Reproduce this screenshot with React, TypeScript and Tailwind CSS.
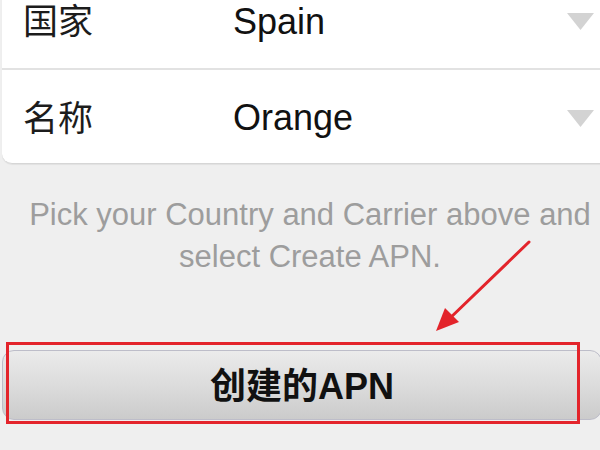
export default function App() {
  return (
    <div className="relative w-[600px] h-[450px] overflow-hidden bg-[#efefef] font-['Liberation_Sans','Noto_Sans_CJK_SC',sans-serif]">
      {/* carrier picker card */}
      <div className="-mt-[27px] ml-[2px] -mr-[12px] bg-white rounded-bl-[10px] border-b border-[#d6d6d6] shadow-[0_1px_1px_rgba(0,0,0,0.06)]">
        <div className="flex items-center h-[97px] pt-[2px] border-b-2 border-[#e2e2e2]">
          <span className="w-[231px] pl-[21px] text-[35px] leading-none text-[#1c1c1c]">国家</span>
          <span className="flex-1 text-[36px] leading-none text-[#111]">Spain</span>
          <Caret />
        </div>
        <div className="flex items-center h-[93px] pt-[3px]">
          <span className="w-[231px] pl-[21px] text-[35px] leading-none text-[#1c1c1c]">名称</span>
          <span className="flex-1 text-[36px] leading-none text-[#111]">Orange</span>
          <Caret />
        </div>
      </div>

      <p className="mt-[30px] pl-[20px] text-center text-[31px] leading-[42px] text-[#9d9d9d]">
        Pick your Country and Carrier above and
        <br />
        select Create APN.
      </p>

      {/* create button with red highlight */}
      <div className="relative mt-[72px] ml-[2px] -mr-[2px]">
        <button className="w-full h-[70px] pt-[4px] rounded-[12px] border border-[#bdbdc9] bg-gradient-to-b from-[#ebebeb] via-[#dcdcdc] to-[#cbcbcb] flex items-center justify-center text-[36px] font-bold text-[#111]">
          创建的APN
        </button>
        <div className="absolute -top-[8px] left-[4px] w-[574px] h-[82px] border-[3px] border-[#e3242b]" />
      </div>

      <svg className="absolute left-0 top-0" width="600" height="450" viewBox="0 0 600 450">
        <line x1="529" y1="242" x2="447" y2="321" stroke="#e3242b" strokeWidth="3" strokeLinecap="round" />
        <polygon points="436,331 445,308 459,322" fill="#e3242b" />
      </svg>
    </div>
  )
}

function Caret() {
  return (
    <svg className="mr-[18px]" width="27" height="17" viewBox="0 0 27 17">
      <polygon points="0,0 27,0 13.5,17" fill="#d3d3d3" />
    </svg>
  )
}
